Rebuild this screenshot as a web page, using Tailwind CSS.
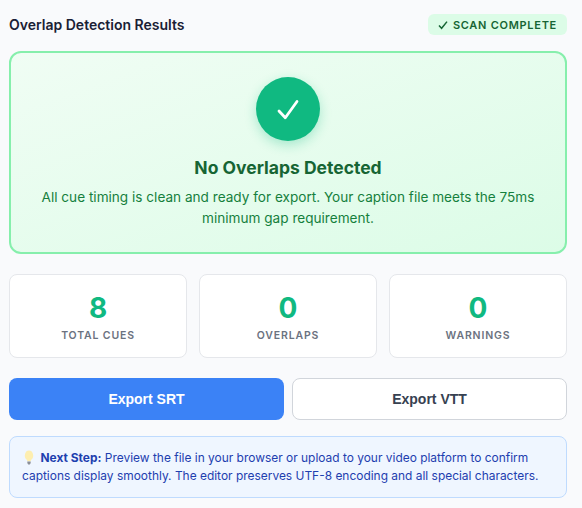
<!DOCTYPE html>
<html lang="en">
<head>
    <meta charset="UTF-8">
    <meta name="viewport" content="width=device-width, initial-scale=1.0">
    <title>Overlap Detection Results</title>
    <script src="https://cdn.jsdelivr.net/npm/@tailwindcss/browser@4"></script>
</head>
<body class="bg-[#f9fafc] font-['Inter',sans-serif] overflow-hidden">

    <section class="w-[582px] h-[508px] pl-[9px] pr-[15px] pt-[14px]">
        <div class="flex items-center justify-between h-[21px] mb-[16px]">
            <h2 class="text-[14px] font-semibold text-[#1a2035]">Overlap Detection Results</h2>
            <span class="flex items-center gap-[5px] h-[21px] pt-[1px] px-[10px] rounded-md bg-[#dcfce7] text-[#166534] text-[11px] font-semibold tracking-[0.72px] uppercase">
                <svg class="w-[10px] h-[10px]" viewBox="0 0 10 10" fill="none" stroke="currentColor" stroke-width="1.5"><path d="M1 5.5 L3.6 8.3 L9 1.6"/></svg>
                Scan Complete
            </span>
        </div>

        <div class="flex flex-col items-center h-[203px] pt-[24px] rounded-xl border-2 border-[#86efac] bg-gradient-to-br from-[#f0fdf4] to-[#dcfce7] mb-[20px]">
            <div class="flex items-center justify-center w-[64px] h-[64px] rounded-full bg-[#10b981] shadow-[0_4px_12px_rgba(16,185,129,0.3)]">
                <svg class="w-[24px] h-[24px]" viewBox="0 0 24 24" fill="none" stroke="white" stroke-width="2.8" stroke-linecap="round" stroke-linejoin="round"><path d="M3 14 L9.3 20.8 L21 4.5"/></svg>
            </div>
            <h3 class="mt-[14px] text-[17.5px] leading-[26px] font-bold text-[#166534]">No Overlaps Detected</h3>
            <p class="mt-[6px] w-[520px] text-center text-[13.6px] leading-[21px] text-[#15803d]">All cue timing is clean and ready for export. Your caption file meets the 75ms minimum gap requirement.</p>
        </div>

        <div class="grid grid-cols-3 gap-[12px] mb-[20px]">
            <div class="flex flex-col items-center h-[84px] pt-[16px] rounded-lg border border-[#e5e7eb] bg-white">
                <div class="text-[28px] leading-[34px] font-bold text-[#10b981]">8</div>
                <div class="mt-[3px] text-[10.5px] leading-[16px] font-semibold tracking-[0.85px] text-[#6b7280] uppercase">Total Cues</div>
            </div>
            <div class="flex flex-col items-center h-[84px] pt-[16px] rounded-lg border border-[#e5e7eb] bg-white">
                <div class="text-[28px] leading-[34px] font-bold text-[#10b981]">0</div>
                <div class="mt-[3px] text-[10.5px] leading-[16px] font-semibold tracking-[0.85px] text-[#6b7280] uppercase">Overlaps</div>
            </div>
            <div class="flex flex-col items-center h-[84px] pt-[16px] rounded-lg border border-[#e5e7eb] bg-white">
                <div class="text-[28px] leading-[34px] font-bold text-[#10b981]">0</div>
                <div class="mt-[3px] text-[10.5px] leading-[16px] font-semibold tracking-[0.85px] text-[#6b7280] uppercase">Warnings</div>
            </div>
        </div>

        <div class="grid grid-cols-2 gap-[8px] mb-[16px]">
            <button class="h-[42px] rounded-lg bg-[#3b82f6] text-white text-[14px] font-bold font-['Liberation_Sans',sans-serif]">Export SRT</button>
            <button class="h-[42px] rounded-lg border border-[#d1d5db] bg-white text-[#374151] text-[14px] font-bold font-['Liberation_Sans',sans-serif]">Export VTT</button>
        </div>

        <div class="h-[62px] pl-[12px] pr-[8px] pt-[12px] rounded-lg border border-[#bfdbfe] bg-[#eff6ff] text-[11.95px] leading-[18px] text-[#1e40af]">
            <svg class="inline-block w-[10px] h-[15px] ml-[2px] mr-[6.5px] align-[-3px]" viewBox="0 0 12 15" preserveAspectRatio="none"><path d="M6 .5a5 5 0 0 0-3 9c.6.5.9 1 .9 1.7h4.2c0-.7.3-1.2.9-1.7a5 5 0 0 0-3-9z" fill="#fdeeb0"/><path d="M4 11.4h4v1.6l-1 1.4H5L4 13z" fill="#8b8f99"/></svg><strong class="font-bold">Next Step:</strong> Preview the file in your browser or upload to your video platform to confirm captions display smoothly. The editor preserves UTF-8 encoding and all special characters.
        </div>
    </section>

</body>
</html>
